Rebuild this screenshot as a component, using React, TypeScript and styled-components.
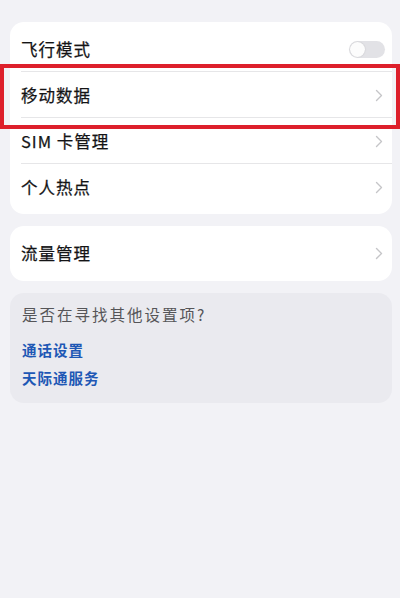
import React from "react";
import styled, { createGlobalStyle } from "styled-components";

const Global = createGlobalStyle`
  html, body { margin: 0; padding: 0; background: #f2f2f6; }
  body { font-family: "Noto Sans CJK SC", "Noto Sans", sans-serif; }
`;

const Page = styled.div`
  width: 400px;
  height: 598px;
  box-sizing: border-box;
  padding: 22px 8px 0 10px;
  display: flex;
  flex-direction: column;
  gap: 12px;
  background: #f2f2f6;
  overflow: hidden;
`;

const Card = styled.div<{ $muted?: boolean }>`
  background: ${(p) => (p.$muted ? "#eaeaef" : "#ffffff")};
  border-radius: 14px;
  padding: ${(p) => (p.$muted ? "14px 12px 10px" : "4px 0")};
  display: flex;
  flex-direction: column;
`;

const Row = styled.div<{ $divider?: boolean; $tall?: boolean }>`
  position: relative;
  height: ${(p) => (p.$tall ? "47px" : "46px")};
  margin-left: 11px;
  padding-right: 9px;
  display: flex;
  align-items: center;
  justify-content: space-between;
  box-shadow: ${(p) => (p.$divider ? "inset 0 -1px 0 #e6e6e8" : "none")};
`;

const Label = styled.span`
  font-size: 16.5px;
  letter-spacing: 1px;
  color: #141416;
  line-height: 1;
  -webkit-text-stroke: 0.25px #141416;
`;

const Highlight = styled.div`
  position: absolute;
  left: -21px;
  right: -8px;
  top: -8px;
  bottom: -11px;
  border: 4px solid #dd1f2b;
  box-sizing: border-box;
  pointer-events: none;
`;

const Toggle = styled.div`
  width: 36px;
  height: 17px;
  border-radius: 9px;
  background: #e2e2e6;
  position: relative;
  margin-right: -2px;
`;

const Knob = styled.div`
  position: absolute;
  left: 1px;
  top: 1px;
  width: 15px;
  height: 15px;
  border-radius: 50%;
  background: #fcfcfc;
  box-shadow: 0 0 1.5px rgba(0, 0, 0, 0.18);
`;

const Hint = styled.div`
  font-size: 15.5px;
  letter-spacing: 2px;
  color: #555558;
  line-height: 1;
  margin-bottom: 13px;
`;

const Link = styled.div`
  font-size: 14.5px;
  letter-spacing: 1px;
  font-weight: 600;
  color: #1e58b5;
  line-height: 1;
  padding: 7px 0;
`;

const Chevron = () => (
  <svg width="8" height="13" viewBox="0 0 8 13">
    <polyline
      points="1.5,1.5 6.5,6.5 1.5,11.5"
      fill="none"
      stroke="#c5c5c8"
      strokeWidth="1.4"
      strokeLinecap="round"
      strokeLinejoin="round"
    />
  </svg>
);

export default function App() {
  return (
    <>
      <Global />
      <Page>
        <Card>
          <Row $divider>
            <Label>飞行模式</Label>
            <Toggle>
              <Knob />
            </Toggle>
          </Row>
          <Row $divider>
            <Label>移动数据</Label>
            <Chevron />
            <Highlight />
          </Row>
          <Row $divider>
            <Label>SIM 卡管理</Label>
            <Chevron />
          </Row>
          <Row>
            <Label>个人热点</Label>
            <Chevron />
          </Row>
        </Card>
        <Card>
          <Row $tall>
            <Label>流量管理</Label>
            <Chevron />
          </Row>
        </Card>
        <Card $muted>
          <Hint>是否在寻找其他设置项?</Hint>
          <Link>通话设置</Link>
          <Link>天际通服务</Link>
        </Card>
      </Page>
    </>
  );
}
